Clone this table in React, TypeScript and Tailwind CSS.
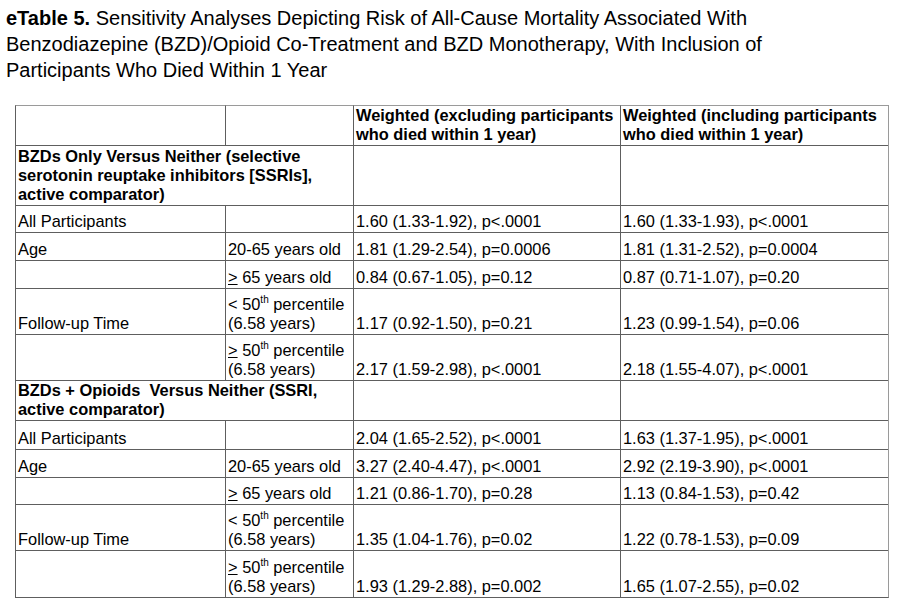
import type { ReactNode } from "react";

interface Row {
  label: string;
  sub: ReactNode;
  excl: string;
  incl: string;
}

interface Section {
  title: string[];
  rows: Row[];
}

const Ge = () => <span className="underline">&gt;</span>;

// "th" sits above the 50 like a Word superscript
const Th = () => <span className="relative -top-[7px] text-[10px] leading-none">th</span>;

const ageYoung = "20-65 years old";
const ageOld = (
  <span className="whitespace-nowrap">
    <Ge /> 65 years old
  </span>
);
const belowMedian = (
  <span className="whitespace-nowrap">
    &lt; 50<Th /> percentile
    <br />
    (6.58 years)
  </span>
);
const aboveMedian = (
  <span className="whitespace-nowrap">
    <Ge /> 50<Th /> percentile
    <br />
    (6.58 years)
  </span>
);

const sections: Section[] = [
  {
    title: [
      "BZDs Only Versus Neither (selective",
      "serotonin reuptake inhibitors [SSRIs],",
      "active comparator)",
    ],
    rows: [
      { label: "All Participants", sub: "", excl: "1.60 (1.33-1.92), p<.0001", incl: "1.60 (1.33-1.93), p<.0001" },
      { label: "Age", sub: ageYoung, excl: "1.81 (1.29-2.54), p=0.0006", incl: "1.81 (1.31-2.52), p=0.0004" },
      { label: "", sub: ageOld, excl: "0.84 (0.67-1.05), p=0.12", incl: "0.87 (0.71-1.07), p=0.20" },
      { label: "Follow-up Time", sub: belowMedian, excl: "1.17 (0.92-1.50), p=0.21", incl: "1.23 (0.99-1.54), p=0.06" },
      { label: "", sub: aboveMedian, excl: "2.17 (1.59-2.98), p<.0001", incl: "2.18 (1.55-4.07), p<.0001" },
    ],
  },
  {
    title: ["BZDs + Opioids\u00a0 Versus Neither (SSRI,", "active comparator)"],
    rows: [
      { label: "All Participants", sub: "", excl: "2.04 (1.65-2.52), p<.0001", incl: "1.63 (1.37-1.95), p<.0001" },
      { label: "Age", sub: ageYoung, excl: "3.27 (2.40-4.47), p<.0001", incl: "2.92 (2.19-3.90), p<.0001" },
      { label: "", sub: ageOld, excl: "1.21 (0.86-1.70), p=0.28", incl: "1.13 (0.84-1.53), p=0.42" },
      { label: "Follow-up Time", sub: belowMedian, excl: "1.35 (1.04-1.76), p=0.02", incl: "1.22 (0.78-1.53), p=0.09" },
      { label: "", sub: aboveMedian, excl: "1.93 (1.29-2.88), p=0.002", incl: "1.65 (1.07-2.55), p=0.02" },
    ],
  },
];

function Cell({ children, className = "" }: { children?: ReactNode; className?: string }) {
  return (
    <div className={`flex items-end border-l border-t border-[#5e5e5e] pb-px pl-[2px] ${className}`}>
      <div>{children}</div>
    </div>
  );
}

export default function App() {
  return (
    <div className="min-h-screen bg-white text-black font-['Liberation_Sans',Arial,sans-serif]">
      <h1 className="pl-[6px] pt-[5px] text-[20px] leading-[26px] font-normal">
        <b>eTable 5.</b> Sensitivity Analyses Depicting Risk of All-Cause Mortality Associated With
        <br />
        Benzodiazepine (BZD)/Opioid Co-Treatment and BZD Monotherapy, With Inclusion of
        <br />
        Participants Who Died Within 1 Year
      </h1>

      <div className="ml-[15px] mt-[22px] grid w-max grid-cols-[210px_128px_267px_268px] grid-rows-[40px_60px_27px_28px_28px_46px_46px_40px_29px_28px_27px_46px_47px] border-b border-r border-b-[#5e5e5e] border-r-[#9a9a9a] text-[16.4px] leading-[19px]">
        <Cell className="border-t-[#9a9a9a]" />
        <Cell className="border-t-[#9a9a9a]" />
        <Cell className="border-t-[#9a9a9a] font-bold whitespace-nowrap">
          Weighted (excluding participants
          <br />
          who died within 1 year)
        </Cell>
        <Cell className="border-t-[#9a9a9a] font-bold whitespace-nowrap">
          Weighted (including participants
          <br />
          who died within 1 year)
        </Cell>

        {sections.map((section) => (
          <>
            <Cell className="col-span-2 font-bold whitespace-nowrap">
              {section.title.map((line, i) => (
                <div key={i}>{line}</div>
              ))}
            </Cell>
            <Cell />
            <Cell />
            {section.rows.map((row, i) => (
              <>
                <Cell key={`l${i}`}>{row.label}</Cell>
                <Cell key={`s${i}`}>{row.sub}</Cell>
                <Cell key={`e${i}`}>{row.excl}</Cell>
                <Cell key={`i${i}`}>{row.incl}</Cell>
              </>
            ))}
          </>
        ))}
      </div>
    </div>
  );
}
